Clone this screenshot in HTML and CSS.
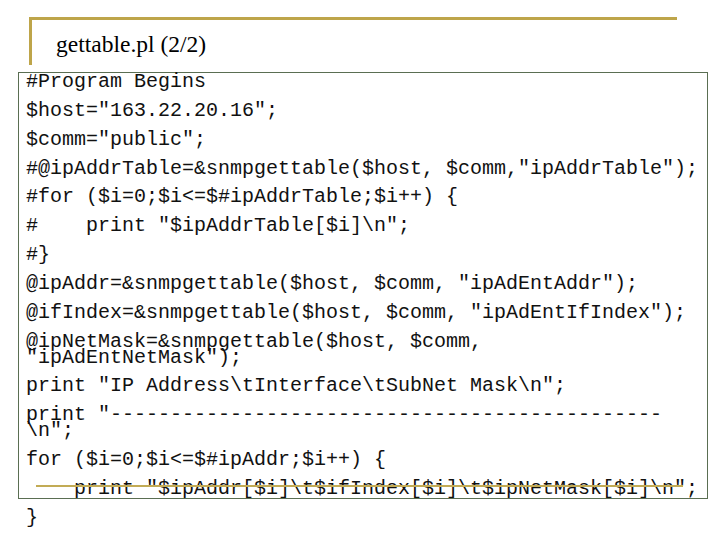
FILE: index.html
```html
<!DOCTYPE html>
<html>
<head>
<meta charset="utf-8">
<link rel="stylesheet" href="styles.css">
</head>
<body>
<div class="slide">
  <div class="header">
    <h1 class="title">gettable.pl (2/2)</h1>
  </div>
  <div class="codebox">
    <div class="ln">#Program Begins</div>
    <div class="ln">$host="163.22.20.16";</div>
    <div class="ln">$comm="public";</div>
    <div class="ln">#@ipAddrTable=&amp;snmpgettable($host, $comm,"ipAddrTable");</div>
    <div class="ln">#for ($i=0;$i&lt;=$#ipAddrTable;$i++) {</div>
    <div class="ln">#    print "$ipAddrTable[$i]\n";</div>
    <div class="ln">#}</div>
    <div class="ln">@ipAddr=&amp;snmpgettable($host, $comm, "ipAdEntAddr");</div>
    <div class="ln">@ifIndex=&amp;snmpgettable($host, $comm, "ipAdEntIfIndex");</div>
    <div class="ln">@ipNetMask=&amp;snmpgettable($host, $comm,<br>"ipAdEntNetMask");</div>
    <div class="ln">print "IP Address\tInterface\tSubNet Mask\n";</div>
    <div class="ln">print "----------------------------------------------<br>\n";</div>
    <div class="ln">for ($i=0;$i&lt;=$#ipAddr;$i++) {</div>
    <div class="ln">    print "$ipAddr[$i]\t$ifIndex[$i]\t$ipNetMask[$i]\n";</div>
    <div class="ln">}</div>
  </div>
  <div class="rule"></div>
</div>
</body>
</html>
```
FILE: styles.css
```css
html, body {
  margin: 0;
  padding: 0;
  background: #ffffff;
}

.slide {
  position: relative;
  width: 720px;
  height: 540px;
  overflow: hidden;
}

.header {
  margin: 17px 0 0 29px;
  width: 648px;
  height: 48px;
  box-sizing: border-box;
  border-top: 3px solid #bea54a;
  border-left: 3px solid #bea54a;
  padding: 13.4px 0 0 24px;
}

.title {
  margin: 0;
  font-family: "Liberation Serif", "Times New Roman", serif;
  font-weight: normal;
  font-size: 23.5px;
  line-height: 1;
  color: #000000;
}

.codebox {
  margin: 7px 0 0 18px;
  width: 690px;
  height: 427px;
  box-sizing: border-box;
  border: 1px solid #5a6e52;
  padding: 1px 0 0 7px;
  display: flex;
  flex-direction: column;
  gap: 12.85px;
}

.ln {
  font-family: "Liberation Mono", "Courier New", monospace;
  font-size: 20px;
  line-height: 16px;
  white-space: pre;
  color: #111111;
}

.rule {
  position: absolute;
  left: 36px;
  top: 485px;
  width: 647px;
  height: 2px;
  background: #c2ab55;
}
```
